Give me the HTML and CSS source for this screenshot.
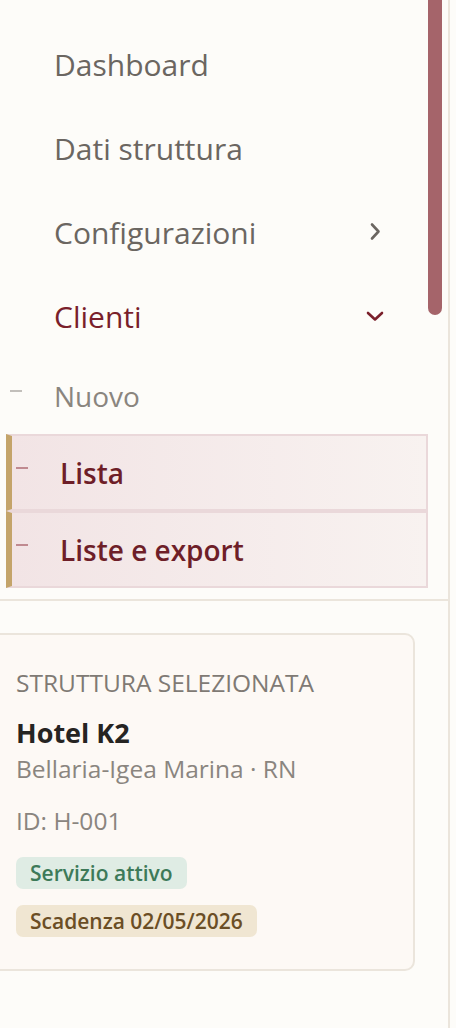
FILE: index.html
```html
<!DOCTYPE html>
<html lang="it">
<head>
<meta charset="utf-8">
<title>Menu</title>
<link rel="stylesheet" href="styles.css">
</head>
<body>
<aside class="sidebar">
  <nav class="nav">
    <a class="nav-item">Dashboard</a>
    <a class="nav-item">Dati struttura</a>
    <a class="nav-item">
      <span>Configurazioni</span>
      <svg class="chev" viewBox="0 0 20 20" width="20" height="20"><path d="M6 2.5 L12.5 9.5 L6 16.5" fill="none" stroke="currentColor" stroke-width="2.6" stroke-linecap="round" stroke-linejoin="round"/></svg>
    </a>
    <a class="nav-item nav-item-open">
      <span>Clienti</span>
      <svg class="chev" viewBox="0 0 20 20" width="20" height="20"><path d="M3 7 L10 13.5 L17 7" fill="none" stroke="currentColor" stroke-width="2.6" stroke-linecap="round" stroke-linejoin="round"/></svg>
    </a>
    <div class="sub">
      <a class="sub-item"><span class="dash"></span><span>Nuovo</span></a>
      <a class="sub-item sub-active"><span class="dash"></span><span>Lista</span></a>
      <a class="sub-item sub-active"><span class="dash"></span><span>Liste e export</span></a>
    </div>
  </nav>
  <div class="divider"></div>
  <section class="card">
    <div class="card-label">STRUTTURA SELEZIONATA</div>
    <div class="card-title">Hotel K2</div>
    <div class="card-place">Bellaria-Igea Marina · RN</div>
    <div class="card-id">ID: H-001</div>
    <div class="badges">
      <span class="badge badge-green">Servizio attivo</span>
      <span class="badge badge-gold">Scadenza 02/05/2026</span>
    </div>
  </section>
  <div class="scrollbar"></div>
</aside>
</body>
</html>
```
FILE: styles.css
```css
* { box-sizing: border-box; }
html, body { margin: 0; padding: 0; }
body {
  background: #fdfcf9;
  font-family: "Open Sans", "Noto Sans", sans-serif;
  overflow: hidden;
}
.sidebar {
  position: relative;
  width: 450px;
  min-height: 1028px;
  border-right: 2px solid #ebe5dc;
  overflow: hidden;
}
.nav {
  padding-top: 22px;
  display: flex;
  flex-direction: column;
}
.nav-item {
  height: 84px;
  display: flex;
  align-items: center;
  justify-content: space-between;
  padding: 0 62px 0 54px;
  font-size: 30px;
  color: #6b6661;
  text-decoration: none;
}
.nav-item-open { color: #7a1f2b; padding-right: 63px; }
.chev { display: block; }
.sub { display: flex; flex-direction: column; }
.sub-item {
  display: flex;
  align-items: center;
  height: 76px;
  font-size: 28px;
  color: #8a857f;
  padding-left: 10px;
}
.sub-item .dash {
  width: 12px;
  height: 2px;
  background: #c2bfbb;
  margin-right: 32px;
  margin-top: -10px;
}
.sub-active {
  height: 77px;
  margin-left: 6px;
  width: 422px;
  padding-left: 4px;
  border: 2px solid #ead8da;
  border-left: 6px solid #c4a46a;
  background: linear-gradient(90deg, #f2e4e5 0%, #f8f2f0 100%);
  color: #6e1e28;
  font-weight: 600;
}
.sub-active .dash {
  background: #c08a90;
  margin-right: 32px;
}
.divider {
  margin-top: 11px;
  height: 2px;
  background: #ebe5dc;
  width: 448px;
}
.card {
  margin: 32px 0 0 -10px;
  width: 425px;
  height: 338px;
  border: 2px solid #ebe5dc;
  border-radius: 10px;
  background: #fdf9f5;
  padding: 31px 24px 0 24px;
}
.card-label {
  font-size: 24.5px;
  color: #7f7a74;
  line-height: 34px;
}
.card-title {
  margin-top: 15px;
  font-size: 27px;
  font-weight: 700;
  color: #262422;
  line-height: 36px;
}
.card-place {
  font-size: 24.5px;
  color: #8a857f;
  line-height: 36px;
}
.card-id {
  margin-top: 16px;
  font-size: 24.5px;
  color: #8a857f;
  line-height: 36px;
}
.badges {
  margin-top: 18px;
  display: flex;
  flex-direction: column;
  align-items: flex-start;
  gap: 16px;
}
.badge {
  height: 32px;
  display: inline-flex;
  align-items: center;
  padding: 0 14px;
  border-radius: 7px;
  font-size: 21px;
  font-weight: 600;
}
.badge-green { background: #dfece4; color: #3d7a59; }
.badge-gold { background: #f0e6d2; color: #6b4e25; }
.scrollbar {
  position: absolute;
  top: -10px;
  left: 428px;
  width: 14px;
  height: 325px;
  border-radius: 7px;
  background: #a5646a;
}
```
